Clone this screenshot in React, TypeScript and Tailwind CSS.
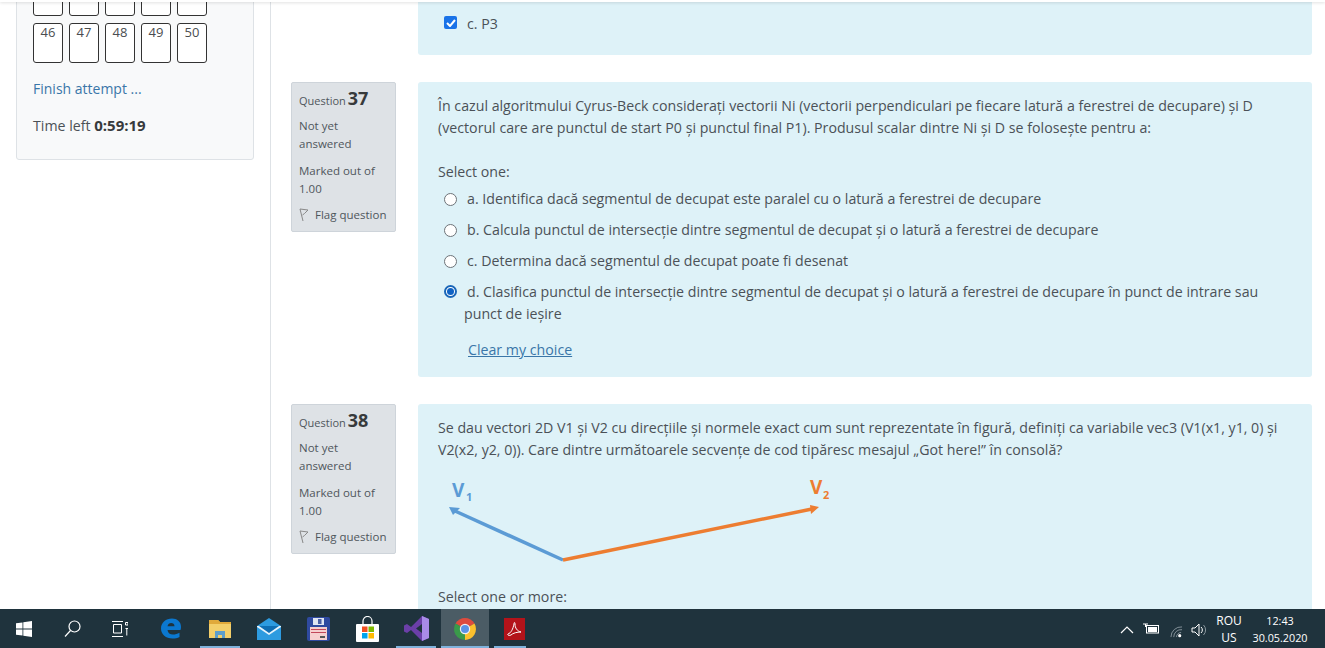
import React from "react";

const font = "font-['Open_Sans','Noto_Sans',sans-serif]";

function Nav({ n }: { n?: number }) {
  return (
    <div className="w-[30px] h-[40px] border border-[#333] rounded-[3px] text-center text-[13px] leading-[17px] text-[#4a4d50] bg-white">
      {n}
    </div>
  );
}

function Info({ n }: { n: number }) {
  return (
    <div className="w-[105px] h-[150px] shrink-0 bg-[#dee2e6] border border-[#ced4da] rounded-[2px] pl-[7px] pt-[6px] text-[11.5px] leading-[18px] text-[#4f565c]">
      <div className="h-[24px] flex items-baseline gap-[2px] text-[11px]">
        Question <span className="text-[18px] font-bold text-[#373a3c]">{n}</span>
      </div>
      <div className="mt-[4px]">Not yet<br />answered</div>
      <div className="mt-[9px]">Marked out of<br />1.00</div>
      <div className="mt-[8px] flex items-center gap-[6px]">
        <svg width="10" height="14" viewBox="0 0 10 14" fill="none" stroke="#888" strokeWidth="1">
          <path d="M1 1l8 1-3.500 3.500-2 1.500M1 1l3 12" />
        </svg>
        Flag question
      </div>
    </div>
  );
}

function Radio({ on, top, children }: { on?: boolean; top?: boolean; children: React.ReactNode }) {
  return (
    <div className={`flex ${top ? "items-start" : "items-center"} leading-[22px] pl-[6px]`}>
      {on ? (
        <span className="w-[13px] h-[13px] mt-[4px] rounded-full shrink-0 bg-white flex items-center justify-center border-2 border-[#1a66b8]">
          <span className="w-[7px] h-[7px] rounded-full bg-[#0f62c4]" />
        </span>
      ) : (
        <span className="w-[13px] h-[13px] rounded-full shrink-0 bg-white border-[1.5px] border-[#6d7378]" />
      )}
      <span className="ml-[7px] indent-[3px]">{children}</span>
    </div>
  );
}

function Arrows() {
  return (
    <svg width="400" height="90" viewBox="0 0 400 90" className="block overflow-visible">
      <path d="M125 86L17 37" stroke="#5b9bd5" strokeWidth="3.500" fill="none" />
      <path d="M11 33l11 1-7 7z" fill="#5b9bd5" />
      <path d="M125 86L374 35" stroke="#ed7d31" strokeWidth="3.500" fill="none" />
      <path d="M381 33l-9-2 1 9z" fill="#ed7d31" />
      <text x="14" y="23" fontSize="19" fontWeight="700" fill="#5b9bd5" fontFamily="Open Sans, sans-serif">V</text>
      <text x="28" y="27" fontSize="11" fontWeight="700" fill="#5b9bd5" fontFamily="Open Sans, sans-serif">1</text>
      <text x="372" y="20" fontSize="19" fontWeight="700" fill="#ed7d31" fontFamily="Open Sans, sans-serif">V</text>
      <text x="385" y="25" fontSize="11" fontWeight="700" fill="#ed7d31" fontFamily="Open Sans, sans-serif">2</text>
    </svg>
  );
}

function TaskIcon({ active, line, children }: { active?: boolean; line?: string; children: React.ReactNode }) {
  return (
    <div className={`relative w-[48px] h-full flex justify-center items-center shrink-0 ${active ? "bg-[#4b5c65]" : ""}`}>
      {children}
      {line && <span className={`absolute bottom-0 h-[2px] bg-[#7fb2dc] ${line}`} />}
    </div>
  );
}

function Taskbar() {
  return (
    <div className="h-[39px] bg-[#1f333d] flex items-center relative shrink-0 text-white">
      <TaskIcon>
        <svg width="16" height="16" viewBox="0 0 16 16" fill="#fff"><path d="M0 2.300l6.500-.9v6.200H0zM7.300 1.300L16 0v7.600H7.300zM0 8.400h6.500v6.200L0 13.700zM7.300 8.400H16V16l-8.700-1.300z" /></svg>
      </TaskIcon>
      <TaskIcon>
        <svg width="17" height="17" viewBox="0 0 17 17" fill="none" stroke="#fff" strokeWidth="1.200"><circle cx="10.500" cy="6.500" r="5.500" /><path d="M6.500 10.500L1 16.500" /></svg>
      </TaskIcon>
      <TaskIcon>
        <svg width="16" height="16" viewBox="0 0 16 16" fill="none" stroke="#fff" strokeWidth="1"><path d="M0 .5h11M0 15.500h11M1.500 3.500h8v8.500h-8z" /><path d="M13.500 1.500h2.500v2.500h-2.500zM13.500 7.500h2.500M14.800 7.500v7" /></svg>
      </TaskIcon>
      <div className="flex h-full ml-[3px] gap-[1px]">
        <TaskIcon>
          <svg width="22" height="23" viewBox="0 0 22 22"><path d="M20.500 12.500H7.500c.4 3 2.500 4.500 5.500 4.500 2.200 0 4.500-.6 6.500-1.800v4.300C17.500 20.600 15 21 12.500 21 6 21 1 17 1 11 1 5 6 1 12 1c5 0 9 3 9 8.500 0 1-.2 2-.5 3zM7.500 8.700h7C14.500 6.500 13 5.500 11.200 5.500S8 6.700 7.500 8.700z" fill="#0b78d0" /></svg>
        </TaskIcon>
        <TaskIcon line="left-[4px] w-[40px]">
          <svg width="22" height="20" viewBox="0 0 22 20"><path d="M0 1h9l2 2h11v16H0z" fill="#f3cf6a" /><path d="M0 1h9l2 2h11v2H0z" fill="#e0a93a" /><path d="M6 19v-7h10v7h-3v-3H9v3z" fill="#5d9ecb" /></svg>
        </TaskIcon>
        <TaskIcon>
          <svg width="24" height="22" viewBox="0 0 24 22"><path d="M0 8L12 0l12 8v14H0z" fill="#2d9be0" /><path d="M0 8h24l-12 8z" fill="#0f6fb5" /><path d="M0 8h2l10 7 10-7h2v1l-12 8L0 9z" fill="#e6f4fc" /></svg>
        </TaskIcon>
        <TaskIcon>
          <svg width="23" height="24" viewBox="0 0 23 24"><rect width="23" height="24" rx="2" fill="#2f4aa0" /><rect x="6" y="1" width="11" height="7" fill="#dfe5f2" /><rect x="11" y="2" width="3.500" height="5" fill="#4a5fa5" /><rect x="3" y="10" width="17" height="13" fill="#f6cfcf" /><path d="M4 12.500h15M4 15.500h15" stroke="#c2475a" strokeWidth="1" /><path d="M13 19h5v2h-5z" fill="#555" /></svg>
        </TaskIcon>
        <TaskIcon>
          <svg width="23" height="26" viewBox="0 0 23 26"><path d="M7 8V5a4.500 4.500 0 019 0v3" stroke="#fff" fill="none" strokeWidth="1.200" /><rect y="8" width="23" height="18" rx="1" fill="#fff" /><rect x="6" y="10.500" width="5.500" height="5.500" fill="#f25022" /><rect x="12.500" y="10.500" width="5.500" height="5.500" fill="#7fba00" /><rect x="6" y="17" width="5.500" height="5.500" fill="#00a4ef" /><rect x="12.500" y="17" width="5.500" height="5.500" fill="#ffb900" /></svg>
        </TaskIcon>
        <TaskIcon line="left-[4px] w-[40px]">
          <svg width="25" height="25" viewBox="0 0 25 25"><path d="M18 0l7 3v19l-7 3L7 14l-4 3-3-1.500v-6L3 8l4 3z" fill="#6b3fa8" /><path d="M18 0l7 3v19l-7 3z" fill="#a98be8" /><path d="M18 8v9l-6-4.500z" fill="#1f333d" /></svg>
        </TaskIcon>
        <TaskIcon active line="left-0 w-full">
          <svg width="22" height="22" viewBox="0 0 22 22"><path d="M11 11L1.500 5.500A11 11 0 0 1 20.500 5.500z" fill="#dd4b3e" /><path d="M11 11l9.500-5.500A11 11 0 0 1 11 22z" fill="#fbc02d" /><path d="M11 11v11A11 11 0 0 1 1.500 5.500z" fill="#3a9a4a" /><circle cx="11" cy="11" r="5.200" fill="#f2f2f2" /><circle cx="11" cy="11" r="4" fill="#5b93e6" /></svg>
        </TaskIcon>
        <TaskIcon line="left-[4px] w-[32px]">
          <svg width="21" height="22" viewBox="0 0 21 22"><rect width="21" height="22" fill="#b3131a" /><path d="M4 16c3-1 5-5 6-10 0-2 1-2 1 0 0 4 2 7 6 8-4 0-8 1-10 3-2 1-4 0-3-1z" fill="none" stroke="#fff" strokeWidth="1" /></svg>
        </TaskIcon>
      </div>
      <div className="absolute left-[1120px] top-[17px]">
        <svg width="14" height="8" viewBox="0 0 14 8" fill="none" stroke="#fff" strokeWidth="1.200"><path d="M1 7l6-6 6 6" /></svg>
      </div>
      <div className="absolute left-[1143px] top-[14px]">
        <svg width="16" height="11" viewBox="0 0 16 11" fill="none" stroke="#fff"><rect x="3.500" y="2.500" width="12" height="7.500" /><rect x="5" y="4" width="9" height="5" fill="#fff" stroke="none" /><path d="M0 1h5M2.500 1v3" /></svg>
      </div>
      <div className="absolute left-[1170px] top-[17px]">
        <svg width="13" height="12" viewBox="0 0 14 13" fill="none" stroke="#8a979e" strokeWidth="1"><path d="M1 12A11 11 0 0 1 13 1M4 12A8 8 0 0 1 13 4M7 12a5 5 0 0 1 5-5" /><circle cx="10.500" cy="10.500" r="1.700" fill="#fff" stroke="none" /></svg>
      </div>
      <div className="absolute left-[1191px] top-[14px]">
        <svg width="17" height="14" viewBox="0 0 17 14" fill="none" stroke="#fff" strokeWidth="1"><path d="M1 5h3l4-4v12L4 9H1z" /><path d="M10 4a4 4 0 0 1 0 6" /><path d="M12.500 2a7 7 0 0 1 0 10" stroke="#8a979e" /></svg>
      </div>
      <div className="absolute left-[1215px] top-[3px] w-[28px] text-center text-[12px] leading-[17px]">ROU<br />US</div>
      <div className="absolute left-[1250px] top-[3px] w-[60px] text-center text-[10.800px] leading-[17px]">12:43<br />30.05.2020</div>
    </div>
  );
}

export default function App() {
  return (
    <div className={`${font} h-[648px] w-[1325px] overflow-hidden flex flex-col bg-white text-[#4b5157] relative`}>
      <div className="absolute top-0 left-0 right-0 h-[2px] bg-white shadow-[0_1px_3px_rgba(0,0,0,0.14)] z-10" />
      <div className="h-[609px] flex overflow-hidden text-[14.200px]">
        <div className="w-[271px] shrink-0 border-r border-[#dee2e6] pl-[16px]">
          <div className="w-[238px] h-[261px] -mt-[101px] bg-[#f8f9fa] border border-[#dee2e6] rounded-[3px] pl-[16px] pt-[76px]">
            <div className="grid grid-cols-[repeat(5,30px)] gap-x-[6px] gap-y-[7px]">
              {[0, 1, 2, 3, 4].map((i) => <Nav key={i} />)}
              {[46, 47, 48, 49, 50].map((n) => <Nav key={n} n={n} />)}
            </div>
            <div className="mt-[15px] text-[14px] leading-[22px] text-[#3a76a8]">Finish attempt ...</div>
            <div className="mt-[14px] leading-[22px]">Time left <b className="text-[15px] text-[#373a3c]">0:59:19</b></div>
          </div>
        </div>
        <div className="flex-1 pl-[20px] pr-[13px]">
          <div className="ml-[127px] h-[55px] bg-[#def2f8] rounded-b-[3px] pl-[26px] pt-[13px] leading-[22px] flex items-start">
            <span className="w-[13px] h-[13px] mt-[3px] bg-[#1a73e8] rounded-[2px] flex items-center justify-center shrink-0">
              <svg width="10" height="8" viewBox="0 0 10 8" fill="none" stroke="#fff" strokeWidth="2"><path d="M1 4l3 3 5-6" /></svg>
            </span>
            <span className="ml-[10px]">c. P3</span>
          </div>
          <div className="mt-[27px] flex gap-[22px]">
            <Info n={37} />
            <div className="flex-1 h-[295px] bg-[#def2f8] rounded-[3px] px-[20px] pt-[13px] leading-[22px]">
              <p>În cazul algoritmului Cyrus-Beck considerați vectorii Ni (vectorii perpendiculari pe fiecare latură a ferestrei de decupare) și D (vectorul care are punctul de start P0 și punctul final P1). Produsul scalar dintre Ni și D se folosește pentru a:</p>
              <p className="mt-[22px]">Select one:</p>
              <div className="mt-[5px] flex flex-col gap-[9px]">
                <Radio>a. Identifica dacă segmentul de decupat este paralel cu o latură a ferestrei de decupare</Radio>
                <Radio>b. Calcula punctul de intersecție dintre segmentul de decupat și o latură a ferestrei de decupare</Radio>
                <Radio>c. Determina dacă segmentul de decupat poate fi desenat</Radio>
                <Radio on top>d. Clasifica punctul de intersecție dintre segmentul de decupat și o latură a ferestrei de decupare în punct de intrare sau punct de ieșire</Radio>
              </div>
              <div className="mt-[14px] ml-[30px] text-[#3a76a8] underline">Clear my choice</div>
            </div>
          </div>
          <div className="mt-[27px] flex gap-[22px]">
            <Info n={38} />
            <div className="flex-1 h-[300px] bg-[#def2f8] rounded-[3px] px-[20px] pt-[13px] leading-[22px]">
              <p>Se dau vectori 2D V1 și V2 cu direcțiile și normele exact cum sunt reprezentate în figură, definiți ca variabile vec3 (V1(x1, y1, 0) și V2(x2, y2, 0)). Care dintre următoarele secvențe de cod tipăresc mesajul „Got here!” în consolă?</p>
              <div className="mt-[13px]"><Arrows /></div>
              <p className="mt-[22px]">Select one or more:</p>
            </div>
          </div>
        </div>
      </div>
      <Taskbar />
    </div>
  );
}
